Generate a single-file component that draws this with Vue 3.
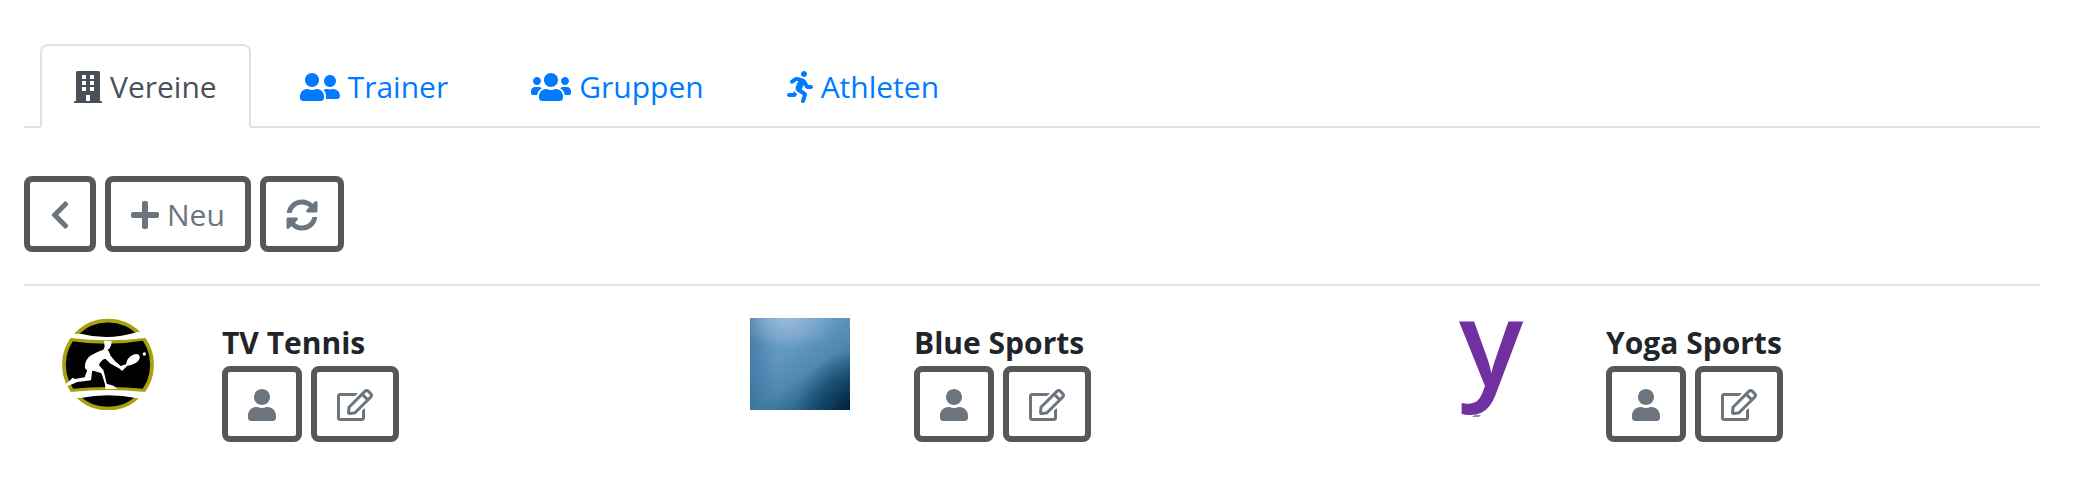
<script setup>
import { ref } from 'vue';

const icons = {
  building: {
    width: 448,
    path: 'M436 480h-20V24c0-13.3-10.7-24-24-24H56C42.7 0 32 10.7 32 24v456H12c-6.6 0-12 5.4-12 12v20h448v-20c0-6.600-5.400-12-12-12zM128 64h64v64h-64zM128 160h64v64h-64zM128 256h64v64h-64zM256 64h64v64h-64zM256 160h64v64h-64zM256 256h64v64h-64zM192 384h64v96h-64z'
  },
  friends: {
    width: 640,
    path: 'M192 256c61.9 0 112-50.1 112-112S253.9 32 192 32 80 82.1 80 144s50.1 112 112 112zm76.8 32h-8.3c-20.8 10-43.9 16-68.5 16s-47.6-6-68.5-16h-8.3C51.6 288 0 339.6 0 403.2V432c0 26.5 21.5 48 48 48h288c26.5 0 48-21.5 48-48v-28.800c0-63.6-51.6-115.2-115.2-115.2zM480 256c53 0 96-43 96-96s-43-96-96-96-96 43-96 96 43 96 96 96zm48 32h-3.8c-13.9 4.8-28.6 8-44.2 8s-30.3-3.2-44.2-8H432c-20.4 0-39.2 5.9-55.7 15.4 24.4 26.3 39.7 61.2 39.7 99.8v38.4c0 2.2-.5 4.3-.6 6.4H592c26.5 0 48-21.5 48-48 0-61.9-50.1-112-112-112z'
  },
  users: {
    width: 640,
    path: 'M96 224c35.3 0 64-28.7 64-64s-28.7-64-64-64-64 28.7-64 64 28.7 64 64 64zm448 0c35.3 0 64-28.7 64-64s-28.7-64-64-64-64 28.7-64 64 28.7 64 64 64zm32 32h-64c-17.6 0-33.5 7.1-45.1 18.6 40.3 22.1 68.9 62 75.1 109.4h66c17.7 0 32-14.3 32-32v-32c0-35.3-28.7-64-64-64zm-256 0c61.9 0 112-50.1 112-112S381.9 32 320 32 208 82.1 208 144s50.1 112 112 112zm76.8 32h-8.3c-20.8 10-43.9 16-68.5 16s-47.6-6-68.5-16h-8.3C179.6 288 128 339.6 128 403.2V432c0 26.5 21.5 48 48 48h288c26.5 0 48-21.5 48-48v-28.8c0-63.6-51.6-115.2-115.2-115.2zm-223.7-13.4C161.5 263.1 145.6 256 128 256H64c-35.3 0-64 28.7-64 64v32c0 17.7 14.3 32 32 32h65.9c6.3-47.4 34.9-87.3 75.2-109.4z'
  },
  running: {
    width: 416,
    path: 'M272 96c26.51 0 48-21.49 48-48S298.51 0 272 0s-48 21.49-48 48 21.49 48 48 48zM113.69 317.47l-14.8 34.52H32c-17.67 0-32 14.33-32 32s14.33 32 32 32h77.45c19.25 0 36.58-11.44 44.11-29.09l8.79-20.52-10.67-6.3c-17.32-10.23-30.06-25.37-37.99-42.61zM384 223.99h-44.03l-26.06-53.25c-12.5-25.55-35.45-44.23-61.78-50.94l-71.08-21.14c-28.3-6.8-57.77-.55-80.84 17.14l-39.67 30.41c-14.03 10.75-16.69 30.83-5.94 44.86s30.84 16.69 44.86 5.94l39.66-30.41c7.67-5.89 17.44-8 25.27-6.14l14.7 4.37-37.46 87.39c-12.62 29.48-1.31 64.01 26.3 80.31l84.98 50.17-27.47 87.73c-5.28 16.86 4.11 34.82 20.97 40.09 3.19 1 6.41 1.48 9.58 1.48 13.61 0 26.23-8.77 30.52-22.45l31.64-101.06c5.91-20.77-2.89-43.08-21.64-54.39l-61.24-36.14 31.31-78.28 20.27 41.43c8 16.34 24.92 26.89 43.11 26.89H384c17.67 0 32-14.33 32-32s-14.33-31.99-32-31.99z'
  },
  back: {
    width: 320,
    path: 'M34.52 239.03L228.87 44.69c9.37-9.37 24.57-9.37 33.94 0l22.67 22.67c9.36 9.36 9.37 24.52.04 33.9L131.49 256l154.02 154.75c9.34 9.38 9.32 24.54-.04 33.9l-22.67 22.67c-9.37 9.37-24.57 9.37-33.94 0L34.52 272.97c-9.37-9.37-9.37-24.57 0-33.94z'
  },
  plus: {
    width: 448,
    path: 'M416 208H272V64c0-17.67-14.33-32-32-32h-32c-17.67 0-32 14.33-32 32v144H32c-17.67 0-32 14.33-32 32v32c0 17.67 14.33 32 32 32h144v144c0 17.67 14.33 32 32 32h32c17.67 0 32-14.33 32-32V304h144c17.67 0 32-14.33 32-32v-32c0-17.67-14.33-32-32-32z'
  },
  sync: {
    width: 512,
    path: 'M370.72 133.28C339.458 104.008 298.888 87.962 255.848 88c-77.458.068-144.328 53.178-162.791 126.85-1.344 5.363-6.122 9.15-11.651 9.15H24.103c-7.498 0-13.194-6.807-11.807-14.176C33.933 94.924 134.813 8 256 8c66.448 0 126.791 26.136 171.315 68.685L463.03 40.97C478.149 25.851 504 36.559 504 57.941V192c0 13.255-10.745 24-24 24H345.941c-21.382 0-32.09-25.851-16.971-40.971l41.75-41.749zM32 296h134.059c21.382 0 32.09 25.851 16.971 40.971l-41.75 41.75c31.262 29.273 71.835 45.319 114.876 45.28 77.418-.07 144.315-53.144 162.787-126.849 1.344-5.363 6.122-9.15 11.651-9.15h57.304c7.498 0 13.194 6.807 11.807 14.176C478.067 417.076 377.187 504 256 504c-66.448 0-126.791-26.136-171.315-68.685L48.97 471.03C33.851 486.149 8 475.441 8 454.059V320c0-13.255 10.745-24 24-24z'
  },
  user: {
    width: 448,
    path: 'M224 256c70.7 0 128-57.3 128-128S294.7 0 224 0 96 57.3 96 128s57.3 128 128 128zm89.6 32h-16.7c-22.2 10.2-46.9 16-72.9 16s-50.6-5.8-72.9-16h-16.7C60.2 288 0 348.2 0 422.4V464c0 26.5 21.5 48 48 48h352c26.5 0 48-21.5 48-48v-41.6c0-74.2-60.2-134.4-134.4-134.4z'
  },
  edit: {
    width: 576,
    path: 'M402.3 344.9l32-32c5-5 13.7-1.5 13.7 5.7V464c0 26.5-21.5 48-48 48H48c-26.5 0-48-21.5-48-48V112c0-26.5 21.5-48 48-48h273.5c7.1 0 10.7 8.6 5.7 13.7l-32 32c-1.5 1.5-3.5 2.3-5.7 2.3H48v352h352V350.5c0-2.1.8-4.1 2.3-5.6zm156.6-201.8L296.3 405.7l-90.4 10c-26.2 2.9-48.5-19.2-45.6-45.6l10-90.4L432.9 17.1c22.9-22.9 59.9-22.9 82.7 0l43.2 43.2c22.9 22.9 22.9 60 .1 82.8zM460.1 174L402 115.9 216.2 301.8l-7.3 65.3 65.3-7.3L460.1 174zm64.8-79.7l-43.2-43.2c-4.1-4.1-10.8-4.1-14.8 0L436 82l58.1 58.1 30.9-30.9c4-4.2 4-10.8-.1-14.9z'
  }
};

const tabs = [
  { id: 'vereine', label: 'Vereine', icon: 'building' },
  { id: 'trainer', label: 'Trainer', icon: 'friends' },
  { id: 'gruppen', label: 'Gruppen', icon: 'users' },
  { id: 'athleten', label: 'Athleten', icon: 'running' }
];

const toolbar = [
  { icon: 'back', title: 'Zurück' },
  { icon: 'plus', title: 'Neu', label: 'Neu' },
  { icon: 'sync', title: 'Aktualisieren' }
];

const clubs = [
  { name: 'TV Tennis', logo: 'tennis' },
  { name: 'Blue Sports', logo: 'blue' },
  { name: 'Yoga Sports', logo: 'yoga' }
];

const clubActions = [
  { icon: 'user', title: 'Trainer' },
  { icon: 'edit', title: 'Bearbeiten' }
];

const activeTab = ref('vereine');

const viewBox = (name) => `0 0 ${icons[name].width} 512`;
</script>

<template>
  <main class="page">
    <nav class="tabs">
      <a
        v-for="tab in tabs"
        :key="tab.id"
        class="tab"
        :class="{ active: tab.id === activeTab }"
        :href="`#${tab.id}`"
        @click.prevent="activeTab = tab.id"
      >
        <svg class="icon" :viewBox="viewBox(tab.icon)" aria-hidden="true">
          <path fill-rule="evenodd" :d="icons[tab.icon].path" />
        </svg>
        <span>{{ tab.label }}</span>
      </a>
    </nav>

    <div class="buttons toolbar">
      <button v-for="item in toolbar" :key="item.icon" type="button" class="btn" :aria-label="item.title">
        <svg class="icon" :viewBox="viewBox(item.icon)" aria-hidden="true">
          <path :d="icons[item.icon].path" />
        </svg>
        <span v-if="item.label">{{ item.label }}</span>
      </button>
    </div>

    <section class="clubs">
      <article v-for="club in clubs" :key="club.name" class="club">
        <svg v-if="club.logo === 'tennis'" class="logo" viewBox="24 24 300 276" aria-hidden="true">
          <circle cx="174" cy="164" r="132" fill="#000" stroke="#a8a00c" stroke-width="11" />
          <!-- seams of the ball -->
          <path d="M62 87Q174 105 286 85M62 243Q174 231 286 243" fill="none" stroke="#a8a00c" stroke-width="12" />
          <path d="M30 72L92 71Q176 93 262 66L320 66L286 84Q174 98 62 84L30 90z" fill="#fff" />
          <path d="M30 240L62 246Q174 234 286 246L320 240V260L262 265Q176 247 92 264L30 262z" fill="#fff" />
          <!-- player -->
          <path
            d="M162 92L185 94Q185 108 179 115L173 119Q179 126 181 136L194 152L212 168L228 163Q231 143 248 135Q265 128 269 139Q271 150 257 159Q243 167 232 167L216 183L209 176L180 160L166 146Q156 148 149 160L147 166L160 180Q167 204 170 221L190 227Q201 232 201 237H166L165 223Q159 202 154 190L133 183Q127 180 126 186L123 211L82 216L52 229L48 222L68 203L75 207L104 202L112 180Q103 179 105 164Q108 147 121 137L142 126L160 119L164 111z"
            fill="#fff"
          />
          <circle cx="283" cy="132" r="5" fill="#fff" />
        </svg>
        <div v-else-if="club.logo === 'blue'" class="logo logo-blue"></div>
        <svg v-else class="logo logo-yoga" viewBox="0 0 100 100" aria-hidden="true">
          <text class="letter" x="49" y="68">y</text>
          <path d="M30 99l3-2h6l-2 2z" fill="#8a8a8a" />
        </svg>
        <div>
          <h2 class="club-name">{{ club.name }}</h2>
          <div class="buttons">
            <button
              v-for="action in clubActions"
              :key="action.icon"
              type="button"
              class="btn"
              :aria-label="`${club.name}: ${action.title}`"
            >
              <svg class="icon" :viewBox="viewBox(action.icon)" aria-hidden="true">
                <path :d="icons[action.icon].path" />
              </svg>
            </button>
          </div>
        </div>
      </article>
    </section>
  </main>
</template>

<style>
body {
  background: #fff;
}
</style>

<style scoped>
.page {
  padding: 44px 39px 40px 24px;
  color: #212529;
  font-family: 'Segoe UI', 'Open Sans', 'Noto Sans', sans-serif;
  font-size: 30px;
  line-height: 48px;
}

.tabs {
  display: flex;
  gap: 15px;
  padding-left: 16px;
  border-bottom: 2px solid #dee2e6;
}

.tab {
  display: flex;
  align-items: center;
  gap: 8px;
  margin-bottom: -2px;
  padding: 17px 32px 15px;
  border: 2px solid transparent;
  border-radius: 8px 8px 0 0;
  color: #007bff;
  text-decoration: none;
}

.tab.active {
  border-color: #dee2e6 #dee2e6 #fff;
  background: #fff;
  color: #495057;
}

.icon {
  display: block;
  width: auto;
  height: 32px;
  fill: currentColor;
}

.buttons {
  display: flex;
  gap: 9px;
}

.toolbar {
  padding: 48px 0 32px;
  border-bottom: 2px solid #e5e5e5;
}

.btn {
  display: flex;
  align-items: center;
  gap: 8px;
  margin: 0;
  height: 76px;
  padding: 2px 20px 0;
  border: 6px solid #575757;
  border-radius: 8px;
  background: #fff;
  color: #6c757d;
  font: inherit;
  cursor: pointer;
}

.clubs {
  display: grid;
  grid-template-columns: repeat(3, 1fr);
  margin: 32px -30px 0;
}

.club {
  display: flex;
  align-items: flex-start;
  gap: 64px;
  padding-left: 64px;
}

.logo {
  flex: none;
  width: 100px;
  height: 92px;
}

.logo-blue {
  background:
    radial-gradient(ellipse 60% 70% at 105% 105%, #00182c, rgba(0, 40, 70, 0.6) 40%, transparent),
    radial-gradient(ellipse 50% 35% at 38% 0, rgba(160, 190, 218, 0.9), transparent),
    linear-gradient(90deg, rgba(35, 95, 140, 0.5), transparent 28%),
    linear-gradient(145deg, #6f9fc8 10%, #6398c2 35%, #5088ae 58%, #2b6892 76%, #124668);
}

.logo-yoga {
  height: 100px;
  overflow: visible;
}

.letter {
  fill: #7030a0;
  font-size: 120px;
  font-weight: 600;
  text-anchor: middle;
}

.club-name {
  margin: 0;
  padding-top: 2px;
  font-size: 30px;
  font-weight: 700;
  line-height: 46px;
}
</style>
